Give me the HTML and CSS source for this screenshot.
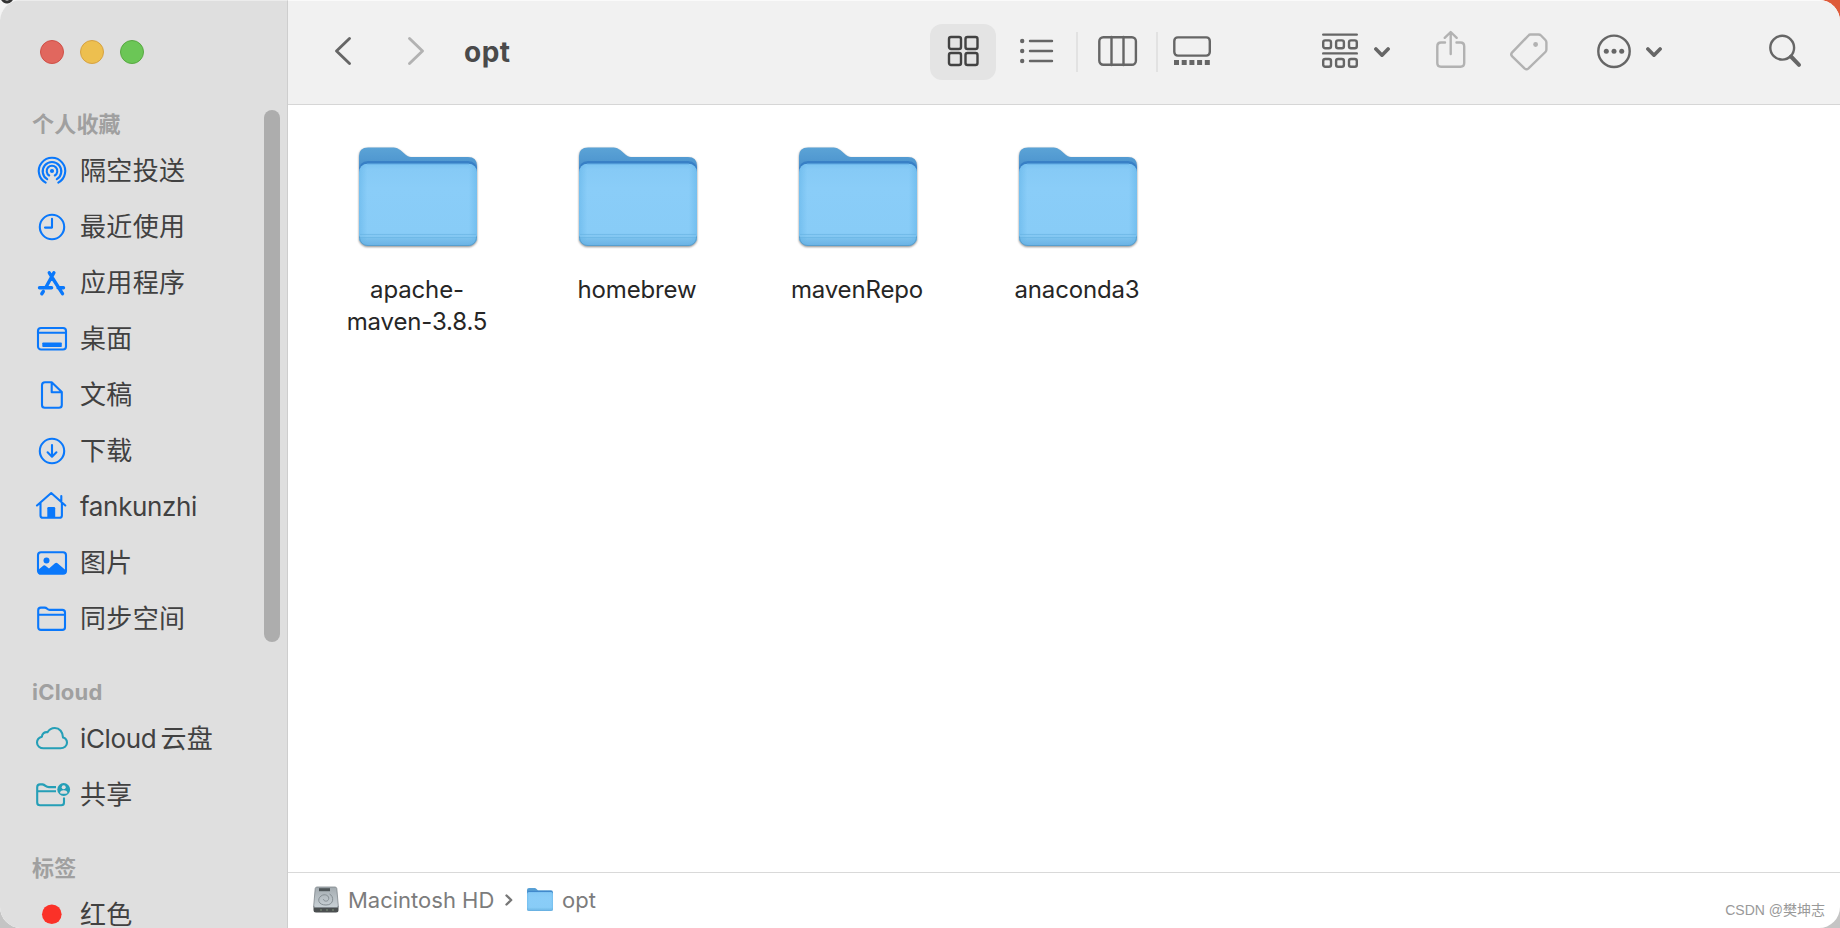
FILE: index.html
```html
<!DOCTYPE html>
<html lang="zh-CN">
<head>
  <meta charset="UTF-8">
  <meta name="viewport" content="width=device-width, initial-scale=1">
  <title>opt</title>
  <link rel="stylesheet" href="styles.css">
</head>
<body>
  <!-- shared folder artwork -->
  <svg class="defs" width="0" height="0">
    <defs>
      <linearGradient id="folderBack" x1="0" y1="0" x2="0" y2="1">
        <stop offset="0" stop-color="#5ba3d6"/>
        <stop offset="0.5" stop-color="#4f97d0"/>
        <stop offset="1" stop-color="#2f75c0"/>
      </linearGradient>
      <linearGradient id="folderFront" x1="0" y1="0" x2="0" y2="1">
        <stop offset="0" stop-color="#7cc4f2"/>
        <stop offset="0.07" stop-color="#86caf6"/>
        <stop offset="0.3" stop-color="#8acdf8"/>
        <stop offset="0.84" stop-color="#88ccf7"/>
        <stop offset="0.9" stop-color="#7cc2ee"/>
        <stop offset="1" stop-color="#6ab2e4"/>
      </linearGradient>
      <linearGradient id="folderSides" x1="0" y1="0" x2="1" y2="0">
        <stop offset="0" stop-color="#5aaee4" stop-opacity="0.45"/>
        <stop offset="0.07" stop-color="#5aaee4" stop-opacity="0"/>
        <stop offset="0.93" stop-color="#5aaee4" stop-opacity="0"/>
        <stop offset="1" stop-color="#5aaee4" stop-opacity="0.45"/>
      </linearGradient>
      <linearGradient id="diskTop" x1="0" y1="0" x2="0" y2="1">
        <stop offset="0" stop-color="#a3abb0"/>
        <stop offset="1" stop-color="#c9d1d6"/>
      </linearGradient>
    </defs>
    <symbol id="folder" viewBox="0 0 118 99">
      <path fill="url(#folderBack)" d="M0 30V9Q0 0.500 9 0.500H33C38 0.500 40 2 43 4.500C47 8 48 10 54 10H109Q118 10 118 19V30Z"/>
      <path fill="#2f76c2" opacity="0.7" d="M0 25Q0 14 9 14H109Q118 14 118 25V30H0Z"/>
      <rect y="16.800" width="118" height="82" rx="8.500" fill="url(#folderFront)"/>
      <rect y="16.800" width="118" height="82" rx="8.500" fill="url(#folderSides)"/>
      <path d="M8 17.300H110" stroke="#6db7ec"/>
      <path d="M1 87.500H117M1 90.500H117" stroke="#68b4e4" opacity="0.6"/>
      <path d="M1 89H117" stroke="#93d1f7" opacity="0.5"/>
      <path d="M0.500 89.500C0.500 95 4 98.500 9 98.500H109C114 98.500 117.500 95 117.500 89.500" fill="none" stroke="#579fce"/>
    </symbol>
  </svg>

  <div class="window">
    <aside class="sidebar">
      <div class="lights">
        <span class="light close"></span>
        <span class="light minimize"></span>
        <span class="light zoom"></span>
      </div>

      <h2>个人收藏</h2>
      <ul>
        <li>
          <svg width="36" height="36" viewBox="0 0 36 36">
            <circle class="fill" cx="18" cy="18" r="2.100"/>
            <path d="M15.200 22.500A5.300 5.300 0 1 1 20.800 22.500M13.200 26.200A9.300 9.300 0 1 1 22.800 26.200M11.700 29.600A13.200 13.200 0 1 1 24.300 29.600"/>
          </svg>
          隔空投送
        </li>
        <li>
          <svg width="36" height="36" viewBox="0 0 36 36">
            <circle cx="18" cy="18" r="12.200"/>
            <path d="M18 9.800V18.600H11"/>
          </svg>
          最近使用
        </li>
        <li>
          <svg width="36" height="36" viewBox="0 0 36 36">
            <path class="thick" d="M15.300 7.800L18 12M19.900 7.800L12.200 21.800M18.800 13.500L28.500 28.700M5.500 22.700H17.600M24 22.700H29.500M9.300 26.500L7.800 28.800"/>
          </svg>
          应用程序
        </li>
        <li>
          <svg width="36" height="36" viewBox="0 0 36 36">
            <rect x="4" y="7" width="28" height="21.500" rx="3"/>
            <path d="M4 11.800H32"/>
            <rect class="fill" x="8.300" y="21.500" width="19.500" height="4.500" rx="0.800"/>
          </svg>
          桌面
        </li>
        <li>
          <svg width="36" height="36" viewBox="0 0 36 36">
            <path d="M11 5.300H17.700L27.800 15V28Q27.800 30.800 25 30.800H10.800Q8 30.800 8 28V8.200Q8 5.300 11 5.300ZM17.700 5.500V15.300H27.500"/>
          </svg>
          文稿
        </li>
        <li>
          <svg width="36" height="36" viewBox="0 0 36 36">
            <circle cx="18" cy="18" r="12.200"/>
            <path d="M18 12V23.500M13.600 19.300L18 23.700L22.400 19.300"/>
          </svg>
          下载
        </li>
        <li>
          <svg width="36" height="36" viewBox="0 0 36 36">
            <path d="M3 16.500L17.200 4L31.300 16.500M6.500 14V26.500Q6.500 28.800 9 28.800H25.400Q27.900 28.800 27.900 26.500V14M27.300 12V7"/>
            <path class="fill" d="M13.300 29V19.200Q13.300 18 14.500 18H20Q21.200 18 21.200 19.200V29Z"/>
          </svg>
          <span class="latin">fankunzhi</span>
        </li>
        <li>
          <svg width="36" height="36" viewBox="0 0 36 36">
            <rect x="4" y="7.300" width="28" height="21.500" rx="3"/>
            <circle class="fill" cx="12.500" cy="15.500" r="3"/>
            <path class="fill" d="M4 25L9.500 20.600Q10.500 20 11.500 20.700L15 23.500L21 18.300Q22.300 17.300 23.500 18.300L32 25.500V26.500Q31.500 28.800 29 28.800H7Q4 28.800 4 26Z"/>
          </svg>
          图片
        </li>
        <li>
          <svg width="36" height="36" viewBox="0 0 36 36">
            <path d="M4.200 26.200V9.200Q4.200 6.600 6.800 6.600H10.500Q12 6.600 13.200 7.700T15.800 8.900H28.300Q31 8.900 31 11.500V26.200Q31 28.900 28.300 28.900H7Q4.200 28.900 4.200 26.200ZM4.200 13.800H31"/>
          </svg>
          同步空间
        </li>
      </ul>

      <h2 class="heading-latin">iCloud</h2>
      <ul class="cloud">
        <li>
          <svg width="36" height="36" viewBox="0 0 36 36">
            <path d="M9.500 27.300H26.500C30 27.300 33 25 33 21.700C33 19 31.300 17.100 29 16.500C29 11 25.500 7 20.800 7C17.300 7 15 8.700 13.500 11.200C10.500 10.800 8 12.500 7.900 15.800C5 16.700 3 18.500 3 21.500C3 25 6 27.300 9.500 27.300Z"/>
          </svg>
          <span><span class="latin">iCloud</span><span class="gap"></span>云盘</span>
        </li>
        <li>
          <svg width="36" height="36" viewBox="0 0 36 36">
            <path class="butt" d="M22 10.100H15Q13 10.100 11.500 8.900T8.500 7.400H6Q3.200 7.400 3.200 10.200V25.500Q3.200 28.300 6 28.300H27.200Q30 28.300 30 25.500V20.500M3.200 14.300H22"/>
            <circle class="fill" cx="29.700" cy="12.500" r="6.400"/>
            <circle class="hole" cx="29.700" cy="10.300" r="2"/>
            <path class="hole" d="M26 16.200Q26 13.300 29.700 13.300T33.400 16.200Q29.700 17.200 26 16.200Z"/>
          </svg>
          共享
        </li>
      </ul>

      <h2>标签</h2>
      <ul>
        <li>
          <svg width="36" height="36" viewBox="0 0 36 36">
            <circle class="tag-red" cx="17.800" cy="17.300" r="9.800"/>
          </svg>
          红色
        </li>
      </ul>
      <div class="scrollbar"></div>
    </aside>

    <div class="content">
      <header class="toolbar">
        <svg class="back" width="18" height="56" viewBox="0 0 18 56">
          <path d="M15.500 14.500L2.500 27L15.500 39.500"/>
        </svg>
        <svg class="forward light-icon" width="18" height="56" viewBox="0 0 18 56">
          <path d="M2.500 14.500L15.500 27L2.500 39.500"/>
        </svg>
        <h1>opt</h1>

        <div class="views">
          <div class="view selected">
            <svg width="32" height="56" viewBox="0 0 32 56">
              <rect x="2" y="13" width="12" height="12" rx="2"/>
              <rect x="18.500" y="13" width="12" height="12" rx="2"/>
              <rect x="2" y="29" width="12" height="12" rx="2"/>
              <rect x="18.500" y="29" width="12" height="12" rx="2"/>
            </svg>
          </div>
          <svg class="list" width="34" height="56" viewBox="0 0 34 56">
            <circle class="fill" cx="2.200" cy="17" r="2.200"/>
            <circle class="fill" cx="2.200" cy="27" r="2.200"/>
            <circle class="fill" cx="2.200" cy="37" r="2.200"/>
            <path d="M10 17H32M10 27H32M10 37H32"/>
          </svg>
          <span class="divider"></span>
          <svg class="columns" width="40" height="56" viewBox="0 0 40 56">
            <rect x="1.300" y="13.200" width="36.600" height="27.600" rx="4"/>
            <path d="M13.500 13V41M25.500 13V41"/>
          </svg>
          <span class="divider"></span>
          <svg class="gallery" width="38" height="56" viewBox="0 0 38 56">
            <rect x="1.300" y="13.400" width="35.500" height="18.200" rx="3.500"/>
            <path class="fill" d="M1 36h5v5h-5zM8.700 36h5v5h-5zM16.400 36h5v5h-5zM24.100 36h5v5h-5zM31.800 36h5v5h-5z"/>
          </svg>
        </div>

        <div class="actions">
          <svg width="36" height="56" viewBox="0 0 36 56">
            <path d="M1.200 10.600H34.800M1.200 29.400H34.800"/>
            <rect x="1.200" y="16.400" width="7.800" height="7.800" rx="2"/>
            <rect x="14.100" y="16.400" width="7.800" height="7.800" rx="2"/>
            <rect x="27" y="16.400" width="7.800" height="7.800" rx="2"/>
            <rect x="1.200" y="35" width="7.800" height="7.800" rx="2"/>
            <rect x="14.100" y="35" width="7.800" height="7.800" rx="2"/>
            <rect x="27" y="35" width="7.800" height="7.800" rx="2"/>
          </svg>
          <svg class="chevron" width="16" height="56" viewBox="0 0 16 56">
            <path d="M1.900 25L8 31.200L14.100 25"/>
          </svg>
          <svg class="share light-icon" width="30" height="56" viewBox="0 0 30 56">
            <path d="M9 18.500H5Q1.300 18.500 1.300 22.200V39Q1.300 42.700 5 42.700H24.500Q28.200 42.700 28.200 39V22.200Q28.200 18.500 24.500 18.500H20.500M14.700 30V9M8.700 13.800L14.700 8L20.700 13.800"/>
          </svg>
          <svg class="tag light-icon" width="38" height="56" viewBox="0 0 38 56">
            <path d="M20.500 10.500H28.500Q30 10.500 31 11.500L35.400 16Q36.400 17 36.400 18.500V25.500Q36.400 27 35.400 28L18.500 44.400Q16.500 46.200 14.500 44.400L2.200 32.300Q0.300 30.400 2.200 28.400L18.500 11.500Q19.300 10.500 20.500 10.500Z"/>
            <circle class="fill" cx="25.600" cy="20.500" r="2.400"/>
          </svg>
          <svg class="more" width="34" height="56" viewBox="0 0 34 56">
            <circle cx="17" cy="27.300" r="15.700"/>
            <circle class="fill" cx="9.300" cy="27.300" r="2.500"/>
            <circle class="fill" cx="17" cy="27.300" r="2.500"/>
            <circle class="fill" cx="24.700" cy="27.300" r="2.500"/>
          </svg>
          <svg class="chevron" width="16" height="56" viewBox="0 0 16 56">
            <path d="M1.900 25L8 31.200L14.100 25"/>
          </svg>
          <svg class="search" width="34" height="56" viewBox="0 0 34 56">
            <circle cx="13.200" cy="23.700" r="11.900"/>
            <path d="M22 32.500L30 40.800"/>
          </svg>
        </div>
      </header>

      <main class="files">
        <div class="file">
          <svg class="folder" width="118" height="99"><use href="#folder"/></svg>
          <span>apache-<br>maven-3.8.5</span>
        </div>
        <div class="file">
          <svg class="folder" width="118" height="99"><use href="#folder"/></svg>
          <span>homebrew</span>
        </div>
        <div class="file">
          <svg class="folder" width="118" height="99"><use href="#folder"/></svg>
          <span>mavenRepo</span>
        </div>
        <div class="file">
          <svg class="folder" width="118" height="99"><use href="#folder"/></svg>
          <span>anaconda3</span>
        </div>
      </main>

      <footer class="pathbar">
        <svg class="disk" width="26" height="28" viewBox="0 0 26 28">
          <path fill="#4b4f50" d="M0.500 20H25.500V24Q25.500 26.500 23 26.500H3Q0.500 26.500 0.500 24Z"/>
          <path fill="url(#diskTop)" stroke="#7f878b" stroke-width="0.800" d="M4 1H22Q23.500 1 23.800 2.500L25.300 20Q25.300 21.500 23.500 21.500H2.500Q0.700 21.500 0.700 20L2.200 2.500Q2.500 1 4 1Z"/>
          <rect x="6" y="2.200" width="11" height="3" fill="#4e5558"/>
          <path fill="none" stroke="#858e93" d="M16.500 8C21 10 21.500 19 13 19C5 19 4 13 8 10C12 7 17 10 15.500 13.500C14.500 16 10.500 15.500 10.500 13"/>
          <path stroke="#7e9278" d="M7 24H9M13 24H15M19 24H21"/>
        </svg>
        <span class="crumb disk-name">Macintosh HD</span>
        <svg class="arrow" width="8" height="12" viewBox="0 0 8 12">
          <path d="M1.500 1.500L6.200 6L1.500 10.500"/>
        </svg>
        <svg class="mini-folder" width="26" height="23" viewBox="0 0 118 99" preserveAspectRatio="none"><use href="#folder" width="118" height="99"/></svg>
        <span class="crumb">opt</span>
        <span class="credit">CSDN @樊坤志</span>
      </footer>
    </div>
  </div>
</body>
</html>
```
FILE: styles.css
```css
* {
  box-sizing: border-box;
}

body {
  margin: 0;
  height: 928px;
  overflow: hidden;
  font-family: Inter, "Noto Sans CJK SC", sans-serif;
  color: #414141;
  background:
    radial-gradient(circle at 7px -3px, #f4f4f4 3px, #333 4px, #333 6px, transparent 7px) top left / 20px 20px no-repeat,
    linear-gradient(to right, #f4f4f4 50%, #de5b3a 50%) top / 100% 40px no-repeat,
    #c4c4c4;
}

h1, h2, ul {
  margin: 0;
  padding: 0;
}

svg {
  display: block;
  flex: none;
}

.defs {
  position: absolute;
}

.window {
  display: flex;
  height: 928px;
  border-radius: 21px;
  overflow: hidden;
  background: #fff;
}

/* sidebar */
.sidebar {
  position: relative;
  flex: none;
  width: 288px;
  height: 928px;
  overflow: hidden;
  background: #dfdfdf;
  border-right: 1px solid #cecece;
  border-top: 1px solid #ececec;
}

.lights {
  display: flex;
  align-items: center;
  gap: 16px;
  height: 104px;
  padding: 0 0 2px 40px;
}

.light {
  width: 24px;
  height: 24px;
  border-radius: 50%;
  border: 1px solid;
}

.close {
  background: #e1675e;
  border-color: #cf5047;
}

.minimize {
  background: #edbf4f;
  border-color: #d6a243;
}

.zoom {
  background: #6bc656;
  border-color: #58a942;
}

.sidebar h2 {
  height: 38px;
  padding-left: 32px;
  font-size: 22px;
  line-height: 38px;
  font-weight: 700;
  letter-spacing: 0.2px;
  color: #a0a0a0;
}

.sidebar .heading-latin {
  font-weight: 650;
}

.sidebar ul + h2 {
  margin-top: 26px;
}

.sidebar li {
  display: flex;
  align-items: center;
  gap: 10px;
  height: 56px;
  padding-left: 34px;
  font-size: 26px;
  line-height: 26px;
  letter-spacing: 0.35px;
  white-space: nowrap;
}

.latin {
  letter-spacing: -0.35px;
}

.sidebar svg {
  fill: none;
  stroke: #0a78fb;
  stroke-width: 2.1;
  stroke-linecap: round;
  stroke-linejoin: round;
  overflow: visible;
}

.sidebar .fill {
  fill: #0a78fb;
  stroke: none;
}

.sidebar .thick {
  stroke-width: 3.4;
}

.sidebar .cloud svg {
  stroke: #259fb7;
}

.sidebar .cloud .fill {
  fill: #259fb7;
}

.cloud .hole {
  fill: #dfdfdf;
  stroke: none;
}

.cloud .butt {
  stroke-linecap: butt;
}

.sidebar .tag-red {
  fill: #fb3128;
  stroke: none;
}

.gap {
  display: inline-block;
  width: 4px;
}

.scrollbar {
  position: absolute;
  top: 109px;
  left: 264px;
  width: 16px;
  height: 532px;
  border-radius: 8px;
  background: #adadad;
}

/* toolbar */
.content {
  flex: 1;
  display: flex;
  flex-direction: column;
}

.toolbar {
  display: flex;
  align-items: center;
  height: 105px;
  padding: 0 37px 2px 46px;
  background: #f1f1f1;
  border-top: 1px solid #fafafa;
  border-bottom: 1px solid #d6d6d6;
}

.toolbar svg {
  fill: none;
  stroke: #666;
  stroke-width: 2.4;
  stroke-linecap: round;
  stroke-linejoin: round;
}

.toolbar .fill {
  fill: #666;
  stroke: none;
}

.toolbar svg.light-icon {
  stroke: #b2b2b2;
}

.toolbar .light-icon .fill {
  fill: #b2b2b2;
}

.toolbar .back,
.toolbar .forward {
  stroke-width: 2.9;
}

.forward {
  margin-left: 55px;
}

.toolbar h1 {
  width: 100px;
  margin-left: 39px;
  font-size: 28px;
  line-height: 32px;
  font-weight: 700;
  letter-spacing: 0.5px;
  color: #4a4a4a;
}

.views,
.actions {
  display: flex;
  align-items: center;
}

.views {
  margin-left: 366px;
}

.view {
  display: flex;
  justify-content: center;
  width: 66px;
  height: 56px;
  border-radius: 12px;
}

.selected {
  background: #e4e4e4;
}

.toolbar .selected svg {
  stroke: #424242;
}

.list {
  margin: 0 22px 0 24px;
}

.divider {
  width: 2px;
  height: 40px;
  background: #e2e2e2;
}

.columns {
  margin: 0 18px 0 20px;
}

.gallery {
  margin-left: 15px;
}

.actions {
  margin-left: auto;
}

.chevron {
  margin-left: 16px;
}

.toolbar .chevron {
  stroke-width: 3.6;
}

.share {
  margin-left: 46px;
}

.tag {
  margin-left: 44px;
}

.more {
  margin-left: 49px;
}

.more + .chevron {
  margin-left: 15px;
}

.search {
  margin-left: 107px;
}

.toolbar .search path {
  stroke-width: 4;
}

/* icon grid */
.files {
  flex: 1;
  display: flex;
  align-items: flex-start;
  padding: 42px 0 0 20px;
}

.file {
  display: flex;
  flex-direction: column;
  align-items: center;
  gap: 28px;
  width: 220px;
  font-size: 24px;
  line-height: 32px;
  letter-spacing: -0.15px;
  text-align: center;
  color: #262626;
}

.file span {
  margin-right: 2px;
}

.folder {
  filter: drop-shadow(0 1px 1px rgba(0, 0, 0, 0.45));
}

/* path bar */
.pathbar {
  display: flex;
  align-items: center;
  height: 56px;
  padding: 0 15px 2px 25px;
  border-top: 1px solid #d9d9d9;
  font-size: 22px;
  color: #7c7c7c;
}

.disk-name {
  width: 147px;
  margin-left: 9px;
  white-space: nowrap;
}

.arrow {
  margin: 0 14px 0 10px;
  fill: none;
  stroke: #777;
  stroke-width: 2.4;
  stroke-linecap: round;
  stroke-linejoin: round;
}

.mini-folder {
  margin-right: 9px;
}

.credit {
  margin: 19px 0 0 auto;
  font-family: "Liberation Sans", "Noto Sans CJK SC", sans-serif;
  font-size: 14px;
  color: #999;
}
```
